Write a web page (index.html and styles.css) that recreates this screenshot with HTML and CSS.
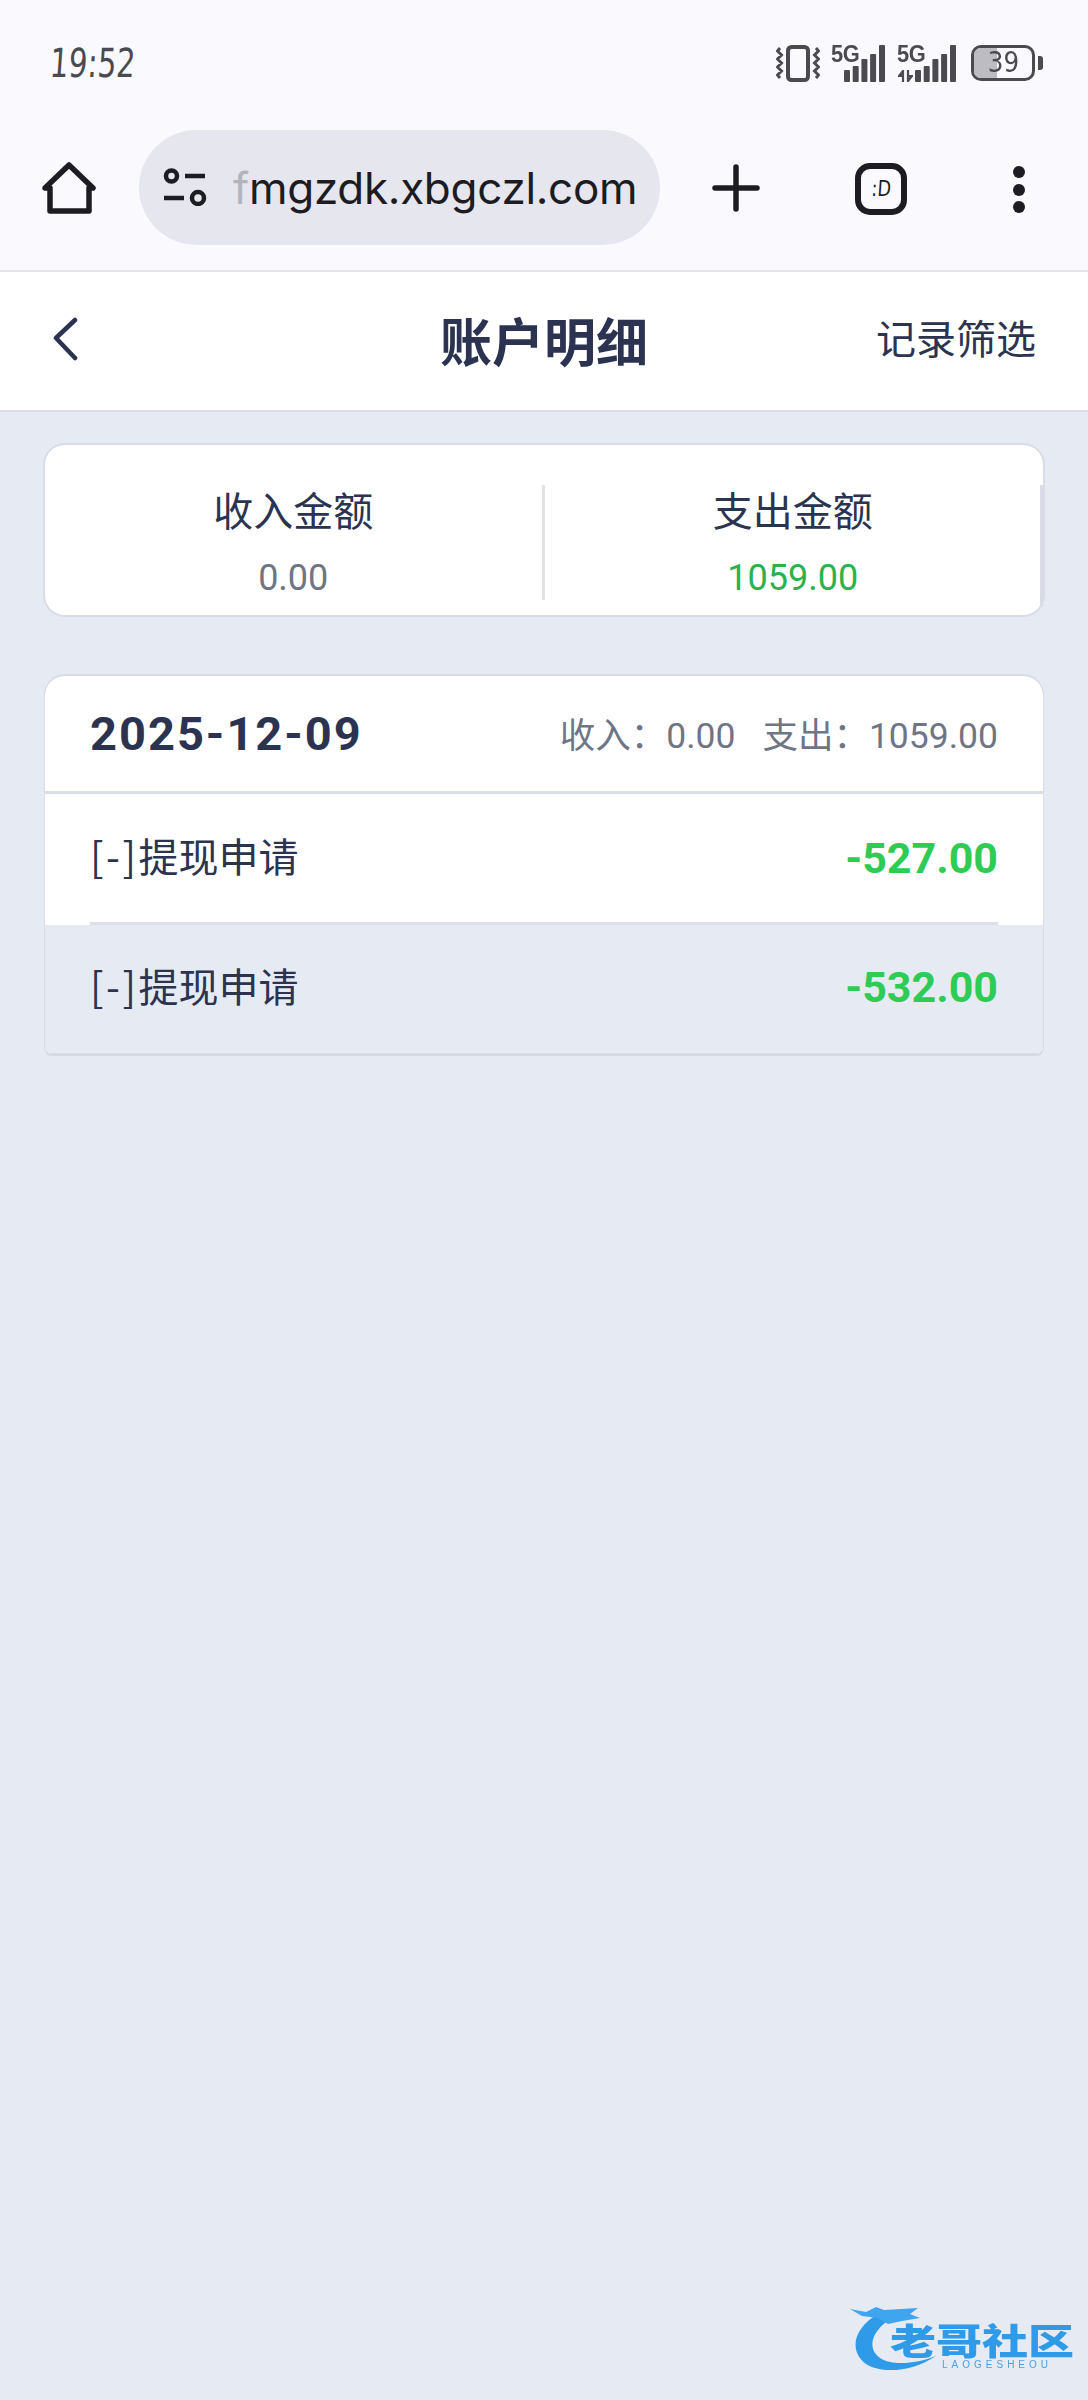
FILE: index.html
```html
<!DOCTYPE html>
<html lang="zh-CN">
<head>
<meta charset="utf-8">
<title>账户明细</title>
<link rel="stylesheet" href="styles.css">
</head>
<body>
<div class="chrome">
  <div class="status">
    <span class="time">19:52</span>
    <div class="status-icons">
      <svg class="ic-vib" width="44" height="37" viewBox="0 0 44 37" fill="none" stroke="#4a4a50">
        <rect x="12" y="2" width="20" height="33" rx="3.500" stroke-width="4"/>
        <path d="M4 3L1.500 6 5.500 10 1.500 14 5.500 18 1.500 22 5.500 26 1.500 30 4 33M40 3l2.500 3-4 4 4 4-4 4 4 4-4 4 4 4-2.500 3" stroke-width="3"/>
      </svg>
      <div class="sig">
        <span class="fiveg">5G</span>
        <svg width="41" height="37" viewBox="0 0 41 37" fill="#4a4a50"><rect x="0" y="25" width="6" height="12" rx="1"/><rect x="8.700" y="21" width="6" height="16" rx="1"/><rect x="17.400" y="14" width="6" height="23" rx="1"/><rect x="26.100" y="9" width="6" height="28" rx="1"/><rect x="35" y="0" width="6" height="37" rx="1"/></svg>
      </div>
      <div class="sig sig2">
        <span class="fiveg">5G</span>
        <svg class="arrows" width="15" height="12" viewBox="0 0 15 12" fill="none" stroke="#4a4a50" stroke-width="2.200"><path d="M5 12V1L1 6h4M10 0v11l4-5h-4"/></svg>
        <svg width="41" height="37" viewBox="0 0 41 37" fill="#4a4a50"><rect x="0" y="25" width="6" height="12" rx="1"/><rect x="8.700" y="21" width="6" height="16" rx="1"/><rect x="17.400" y="14" width="6" height="23" rx="1"/><rect x="26.100" y="9" width="6" height="28" rx="1"/><rect x="35" y="0" width="6" height="37" rx="1"/></svg>
      </div>
      <div class="battery"><div class="batt-body"><div class="batt-fill"></div><span class="batt-num">39</span></div><div class="batt-tip"></div></div>
    </div>
  </div>
  <div class="toolbar">
    <svg class="ic-home" width="54" height="52" viewBox="0 0 54 52" fill="none" stroke="#1c1c22" stroke-width="5.500" stroke-linejoin="round" stroke-linecap="round">
      <path d="M3 26L27 3l24 23h-4v23H8V26z"/>
    </svg>
    <div class="pill">
      <svg class="ic-tune" width="44" height="38" viewBox="0 0 44 38" fill="none" stroke="#1c1c22" stroke-width="4.500">
        <circle cx="8.500" cy="8" r="5.500"/><path d="M22 8h20M1 30h20"/><circle cx="35" cy="30" r="6"/>
      </svg>
      <span class="url"><span class="url-fade">f</span>mgzdk.xbgczl.com</span>
    </div>
    <svg class="ic-plus" width="48" height="48" viewBox="0 0 48 48" stroke="#1c1c22" stroke-width="5.500" stroke-linecap="round"><path d="M24 3v42M3 24h42"/></svg>
    <div class="tab"><span class="tab-face">:D</span></div>
    <div class="dots"><i></i><i></i><i></i></div>
  </div>
</div>

<header class="nav">
  <svg class="back" width="26" height="44" viewBox="0 0 26 44" fill="none" stroke="#2b3350" stroke-width="4.500" stroke-linecap="round" stroke-linejoin="round"><path d="M23 3L4 21l19 20"/></svg>
  <h1 class="title">账户明细</h1>
  <span class="filter">记录筛选</span>
</header>

<main class="content">
  <section class="summary">
    <div class="sum-col">
      <div class="sum-label">收入金额</div>
      <div class="sum-value">0.00</div>
    </div>
    <div class="sum-sep"></div>
    <div class="sum-col">
      <div class="sum-label">支出金额</div>
      <div class="sum-value green">1059.00</div>
    </div>
  </section>

  <section class="ledger">
    <div class="ledger-head">
      <span class="date">2025-12-09</span>
      <div class="totals"><span>收入：0.00</span><span>支出：1059.00</span></div>
    </div>
    <div class="row">
      <span class="row-name"><span class="mark">[-]</span>提现申请</span>
      <span class="amount">-527.00</span>
    </div>
    <div class="row row-active">
      <span class="row-name"><span class="mark">[-]</span>提现申请</span>
      <span class="amount">-532.00</span>
    </div>
  </section>
</main>

<div class="watermark">
  <svg class="dragon" width="100" height="72" viewBox="0 0 100 72">
    <path d="M30 10C6 24 0 46 18 60c16 10 46 8 70-8-20 8-44 10-56 2C18 44 24 26 44 14z" fill="#2f9be8"/>
    <path d="M2 5l16 3 10-5 8 3 34-2-8 6 10 4-18 3-14 3-10-6-16-2z" fill="#3ea5ee"/>
  </svg>
  <span class="wm-title">老哥社区</span>
  <span class="wm-sub">LAOGESHEOU</span>
</div>
</body>
</html>
```
FILE: styles.css
```css
* { box-sizing: border-box; }
html, body { margin: 0; padding: 0; }
body {
  width: 1088px;
  height: 2400px;
  background: #e6eaf3;
  font-family: "Noto Sans CJK SC", "Noto Sans", sans-serif;
  position: relative;
  overflow: hidden;
  color: #2b3350;
}
.chrome {
  height: 272px;
  background: #f9f9fe;
  border-bottom: 2px solid #e3e4ea;
}
.status {
  height: 130px;
  padding: 0 45px 0 50px;
  display: flex;
  justify-content: space-between;
  align-items: flex-start;
}
.time {
  font-family: "DejaVu Sans", sans-serif;
  font-size: 40px;
  line-height: 50px;
  margin-top: 38px;
  color: #4a4a50;
  display: inline-block;
  transform: skewX(-4deg) scaleX(.74);
  transform-origin: left center;
}
.status-icons {
  display: flex;
  align-items: flex-start;
  padding-top: 45px;
}
.ic-vib { flex: none; margin-right: 11px; }
.sig { position: relative; width: 54px; height: 37px; display: flex; justify-content: flex-end; align-items: flex-end; margin-right: 12px; flex: none; }
.sig2 { width: 59px; margin-right: 15px; }
.fiveg {
  position: absolute;
  left: 0;
  top: -3px;
  font-family: "Liberation Sans", sans-serif;
  font-weight: 700;
  font-size: 23px;
  line-height: 24px;
  letter-spacing: -.5px;
  transform: scaleX(.95);
  transform-origin: left top;
  color: #4a4a50;
}
.arrows { position: absolute; left: 1px; bottom: 0; }
.battery { display: flex; align-items: center; }
.batt-body {
  position: relative;
  width: 64px;
  height: 36px;
  border: 3.500px solid #4a4a50;
  border-radius: 10px;
  overflow: hidden;
  text-align: center;
}
.batt-fill { position: absolute; left: 0; top: 0; bottom: 0; width: 39%; background: #bcbcc2; }
.batt-num {
  position: relative;
  font-family: "DejaVu Sans", sans-serif;
  font-size: 29px;
  line-height: 29px;
  color: #4a4a50;
  display: inline-block;
  transform: scaleX(.85);
}
.batt-tip { width: 5px; height: 14px; background: #4a4a50; border-radius: 0 3px 3px 0; margin-left: 3px; }

.toolbar {
  height: 140px;
  display: flex;
  align-items: flex-start;
  position: relative;
}
.ic-home { margin: 32px 0 0 42px; flex: none; }
.pill {
  margin: 0 0 0 43px;
  width: 521px;
  height: 115px;
  border-radius: 58px;
  background: #e6e6ee;
  display: flex;
  align-items: center;
  padding-left: 24px;
  flex: none;
}
.ic-tune { flex: none; margin-top: -2px; }
.url {
  font-family: "Inter", "Roboto", sans-serif;
  font-size: 44px;
  line-height: 60px;
  color: #1c1c22;
  margin-left: 26px;
  white-space: nowrap;
  letter-spacing: -.3px;
}
.url-fade { color: #b4b4bc; }
.ic-plus { margin: 34px 0 0 52px; flex: none; }
.tab {
  margin: 33px 0 0 95px;
  width: 52px;
  height: 52px;
  border: 6px solid #1c1c22;
  border-radius: 15px;
  display: flex;
  align-items: center;
  justify-content: center;
  flex: none;
}
.tab-face { font-family: "DejaVu Sans", sans-serif; font-size: 22px; line-height: 24px; color: #1c1c22; display: inline-block; transform: skewX(-4deg) scaleX(.8); }
.dots { margin: 36px 0 0 106px; display: flex; flex-direction: column; gap: 5.500px; flex: none; }
.dots i { display: block; width: 12px; height: 12px; border-radius: 50%; background: #1c1c22; }

.nav {
  height: 140px;
  background: #fff;
  border-bottom: 2px solid #dbdee8;
  display: flex;
  align-items: center;
  justify-content: space-between;
  padding: 0 52px;
  position: relative;
}
.back { flex: none; margin-top: -4px; }
.title {
  position: absolute;
  left: 0;
  right: 0;
  top: 0;
  margin: 0;
  text-align: center;
  font-size: 52px;
  line-height: 136px;
  font-weight: 700;
  color: #2b3350;
}
.filter { font-size: 40px; line-height: 56px; color: #2b3350; margin-top: -8px; }

.content { padding: 33px 45px 0 45px; }
.summary {
  height: 170px;
  background: #fff;
  border-radius: 20px;
  box-shadow: 0 0 0 2px #d9dce6;
  display: flex;
  align-items: flex-start;
  padding: 36px 2px 0 0;
  position: relative;
}
.summary::after {
  content: "";
  position: absolute;
  right: 0;
  top: 40px;
  bottom: 8px;
  width: 3px;
  background: #d9dce6;
}
.sum-col { flex: 1; text-align: center; }
.sum-label { font-size: 40px; line-height: 56px; color: #2b3350; }
.sum-value { font-family: "Roboto", sans-serif; font-size: 36px; line-height: 44px; color: #6e7585; margin-top: 19px; }
.sum-value.green { color: #2bb24f; }
.sum-sep { width: 3px; height: 115px; background: #dfe1e7; flex: none; margin-top: 4px; }

.ledger {
  margin-top: 61px;
  height: 377px;
  background: #fff;
  border-radius: 20px 20px 6px 6px;
  box-shadow: 0 0 0 1px #d9dce6, 0 -1px 0 1px #d9dce6, 0 3px 0 0 #d6d9e3;
  overflow: hidden;
}
.ledger-head {
  height: 118px;
  padding: 0 45px;
  border-bottom: 3px solid #dcdfe8;
  display: flex;
  align-items: center;
  justify-content: space-between;
}
.date { font-family: "Roboto", sans-serif; font-weight: 700; font-size: 47px; letter-spacing: 2px; color: #2b3350; }
.totals { display: flex; gap: 27px; font-size: 35.500px; line-height: 50px; color: #6e7585; margin-top: 5px; }
.totals span { font-family: "Roboto", "Noto Sans CJK SC", sans-serif; }
.row {
  height: 131px;
  padding: 0 45px;
  display: flex;
  align-items: center;
  justify-content: space-between;
  position: relative;
}
.row:not(.row-active)::after {
  content: "";
  position: absolute;
  left: 45px;
  right: 45px;
  bottom: 0;
  height: 3px;
  background: #dcdfe8;
}
.row-active { background: #e6eaf3; height: 128px; }
.row-name { font-size: 40px; line-height: 56px; color: #2b3350; margin-top: -9px; }
.mark { letter-spacing: 2.500px; }
.amount { font-family: "Roboto", sans-serif; font-weight: 700; font-size: 43px; line-height: 56px; color: #2ecc55; margin-top: -4px; }

.watermark {
  position: absolute;
  left: 848px;
  top: 2304px;
  width: 225px;
  height: 70px;
  filter: blur(.7px);
}
.dragon { position: absolute; left: 0; top: 0; }
.wm-title {
  position: absolute;
  left: 42px;
  top: 18px;
  font-size: 46px;
  line-height: 34px;
  font-weight: 900;
  color: #2f9be8;
  white-space: nowrap;
  transform: scaleY(.8);
}
.wm-sub {
  position: absolute;
  left: 94px;
  top: 55px;
  font-family: "Liberation Sans", sans-serif;
  font-size: 10px;
  line-height: 12px;
  letter-spacing: 4px;
  color: #4a9fe0;
  white-space: nowrap;
}
```
